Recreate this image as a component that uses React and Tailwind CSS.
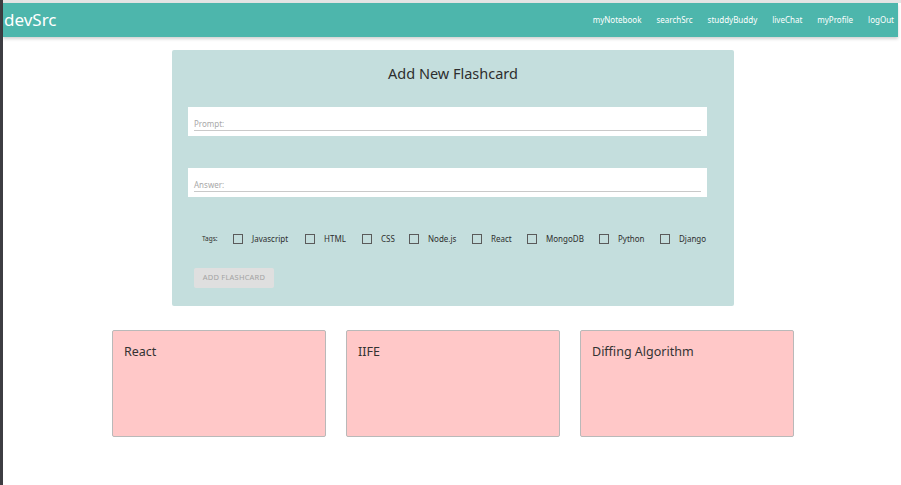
import React from "react";

const tags = [
  ["Javascript", 233],
  ["HTML", 305],
  ["CSS", 362],
  ["Node.js", 409],
  ["React", 472],
  ["MongoDB", 527],
  ["Python", 599],
  ["Django", 660],
];

export default function App() {
  return (
    <div className="w-[901px] h-[485px] bg-white flex overflow-hidden" style={{ fontFamily: '"Noto Sans", "Open Sans", sans-serif' }}>
      <div className="w-[3px] h-full bg-[#3d3d42]" />
      <div className="flex-1 flex flex-col border-t-[3px] border-[#e4e4e4]">
        <header className="h-[34px] mr-[3px] bg-[#4db6ac] flex items-center justify-between shadow-[0_2px_3px_rgba(0,0,0,0.18)]">
          <div className="text-white text-[17px] leading-none pl-[1px] -mt-[2px]">devSrc</div>
          <nav className="flex items-center gap-[15px] pr-[4px] text-white text-[8px]">
            <span>myNotebook</span>
            <span>searchSrc</span>
            <span>studdyBuddy</span>
            <span>liveChat</span>
            <span>myProfile</span>
            <span>logOut</span>
          </nav>
        </header>
        <div className="ml-[169px] mt-[13px] w-[562px] h-[256px] bg-[#c4dedd] rounded-[2px] flex flex-col">
          <h1 className="text-center text-[14.5px] text-[#2e2e2e] mt-[13px] leading-[20px]">Add New Flashcard</h1>
          <div className="ml-[16px] mt-[24px] w-[519px] h-[29px] bg-white px-[6px] flex flex-col justify-end pb-[5px]">
            <div className="text-[8px] text-[#a8a8a8] leading-none pb-[2px]">Prompt:</div>
            <div className="h-[1px] bg-[#c9c9c9]" />
          </div>
          <div className="ml-[16px] mt-[32px] w-[519px] h-[29px] bg-white px-[6px] flex flex-col justify-end pb-[5px]">
            <div className="text-[8px] text-[#a8a8a8] leading-none pb-[2px]">Answer:</div>
            <div className="h-[1px] bg-[#c9c9c9]" />
          </div>
          <div className="relative mt-[36px] h-[12px] text-[8px] text-[#2e2e2e]">
            <span className="absolute left-[30px] top-[1px] text-[6.5px]">Tags:</span>
            {tags.map(([t, x]) => (
              <React.Fragment key={t}>
                <span className="absolute top-[1px] w-[10px] h-[10px] border-[1.5px] border-[#5a5a5a]" style={{ left: x - 172 }} />
                <span className="absolute top-[0px] leading-[12px]" style={{ left: x - 172 + 19 }}>{t}</span>
              </React.Fragment>
            ))}
          </div>
          <div className="ml-[22px] mt-[23px] w-[80px] h-[20px] bg-[#dfdfdf] rounded-[2px] flex items-center justify-center text-[7.5px] text-[#a3a3a3] tracking-[0.2px]">
            ADD FLASHCARD
          </div>
        </div>
        <div className="ml-[109px] mt-[24px] flex gap-[20px]">
          {["React", "IIFE", "Diffing Algorithm"].map((t) => (
            <div key={t} className="w-[214px] h-[107px] bg-[#ffc8c8] border border-[#b9b9b9] rounded-[2px] px-[11px] pt-[13px] text-[12.5px] text-[#333] leading-[16px]">
              {t}
            </div>
          ))}
        </div>
      </div>
    </div>
  );
}
